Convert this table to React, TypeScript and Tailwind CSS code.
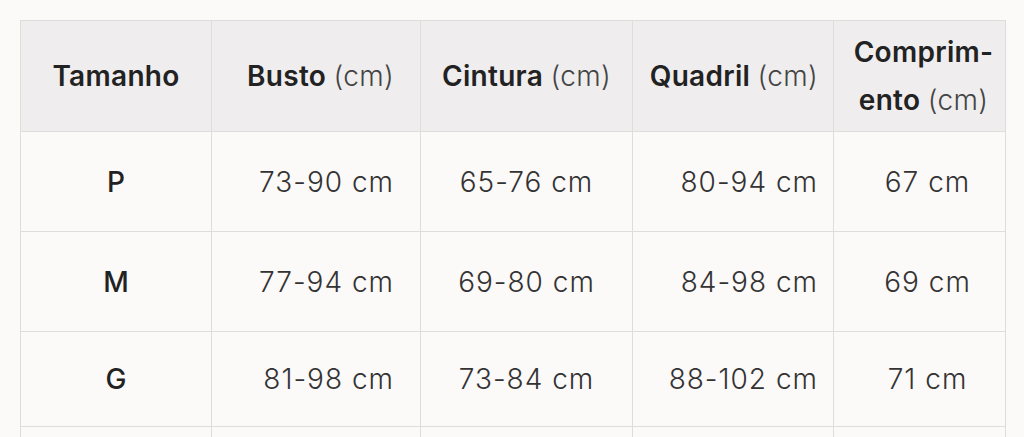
import React from "react";

type Row = { size: string; busto: string; cintura: string; quadril: string; comp: string; h: string };

const rows: Row[] = [
  { size: "P", busto: "73-90 cm", cintura: "65-76 cm", quadril: "80-94 cm", comp: "67 cm", h: "h-[100px]" },
  { size: "M", busto: "77-94 cm", cintura: "69-80 cm", quadril: "84-98 cm", comp: "69 cm", h: "h-[100px]" },
  { size: "G", busto: "81-98 cm", cintura: "73-84 cm", quadril: "88-102 cm", comp: "71 cm", h: "h-[95px]" },
];

export default function App() {
  return (
    <div
      className="h-screen w-full bg-[#fcf9f9] pt-5 pl-5 overflow-hidden"
      style={{ fontFamily: "Inter, Lato, sans-serif" }}
    >
      <table className="border-collapse table-fixed w-[985px] text-[28px] text-[#333]">
        <colgroup>
          <col className="w-[191px]" />
          <col className="w-[209px]" />
          <col className="w-[212px]" />
          <col className="w-[201px]" />
          <col className="w-[172px]" />
        </colgroup>
        <thead>
          {/* header row */}
          <tr className="h-[111px] bg-[#efedee] text-[#222] tracking-[0.3px]">
            <th className="border border-[#e0dcdc] font-semibold text-center">Tamanho</th>
            <th className="border border-[#e0dcdc] font-semibold text-right pr-[26px]">
              Busto <span className="font-light text-[#444]">(cm)</span>
            </th>
            <th className="border border-[#e0dcdc] font-semibold text-center">
              Cintura <span className="font-light text-[#444]">(cm)</span>
            </th>
            <th className="border border-[#e0dcdc] font-semibold text-right pr-[15px]">
              Quadril <span className="font-light text-[#444]">(cm)</span>
            </th>
            <th className="border border-[#e0dcdc] font-semibold text-center leading-[48px] pl-2">
              Comprim-
              <br />
              ento <span className="font-light text-[#444]">(cm)</span>
            </th>
          </tr>
        </thead>
        <tbody className="bg-[#fcf9f9]">
          {rows.map((r) => (
            <tr key={r.size} className={r.h}>
              <td className="border border-[#e0dcdc] text-center font-medium text-[#222]">{r.size}</td>
              <td className="border border-[#e0dcdc] text-right pr-[26px] font-light tracking-[1px]">{r.busto}</td>
              <td className="border border-[#e0dcdc] text-center font-light tracking-[1px]">{r.cintura}</td>
              <td className="border border-[#e0dcdc] text-right pr-[15px] font-light tracking-[1px]">{r.quadril}</td>
              <td className="border border-[#e0dcdc] text-center pl-4 font-light tracking-[1px]">{r.comp}</td>
            </tr>
          ))}
          {/* next row, cut off by the frame */}
          <tr className="h-[100px]">
            <td className="border border-[#e0dcdc]" />
            <td className="border border-[#e0dcdc]" />
            <td className="border border-[#e0dcdc]" />
            <td className="border border-[#e0dcdc]" />
            <td className="border border-[#e0dcdc]" />
          </tr>
        </tbody>
      </table>
    </div>
  );
}
